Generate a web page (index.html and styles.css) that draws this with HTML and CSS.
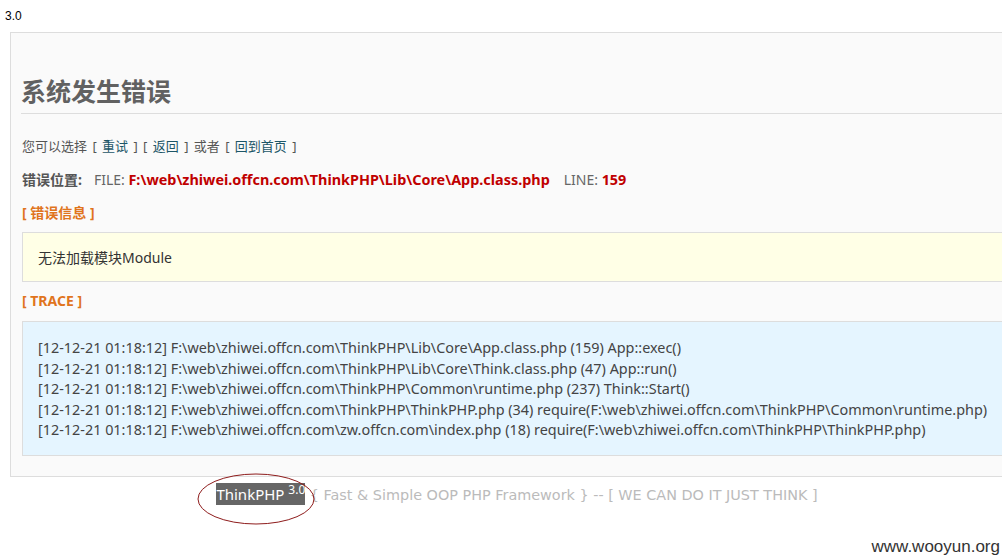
FILE: index.html
```html
<!DOCTYPE html>
<html lang="zh-CN">
<head>
<meta charset="utf-8">
<title>系统发生错误</title>
<link rel="stylesheet" href="styles.css">
</head>
<body>
<div class="ver">3.0</div>
<div class="page">
  <div class="error">
    <h1>系统发生错误</h1>
    <div class="choice">您可以选择 [ <a href="#">重试</a> ] [ <a href="#">返回</a> ] 或者 [ <a href="#">回到首页</a> ]</div>
    <div class="pos"><span class="label">错误位置:</span><span class="key">FILE:</span> <span class="red">F:\web\zhiwei.offcn.com\ThinkPHP\Lib\Core\App.class.php</span><span class="key line">LINE:</span> <span class="red">159</span></div>
    <div class="title">[ 错误信息 ]</div>
    <div class="message">无法加载模块Module</div>
    <div class="title">[ TRACE ]</div>
    <div class="trace">
      <div>[12-12-21 01:18:12] F:\web\zhiwei.offcn.com\ThinkPHP\Lib\Core\App.class.php (159) App::exec()</div>
      <div>[12-12-21 01:18:12] F:\web\zhiwei.offcn.com\ThinkPHP\Lib\Core\Think.class.php (47) App::run()</div>
      <div>[12-12-21 01:18:12] F:\web\zhiwei.offcn.com\ThinkPHP\Common\runtime.php (237) Think::Start()</div>
      <div>[12-12-21 01:18:12] F:\web\zhiwei.offcn.com\ThinkPHP\ThinkPHP.php (34) require(F:\web\zhiwei.offcn.com\ThinkPHP\Common\runtime.php)</div>
      <div>[12-12-21 01:18:12] F:\web\zhiwei.offcn.com\zw.offcn.com\index.php (18) require(F:\web\zhiwei.offcn.com\ThinkPHP\ThinkPHP.php)</div>
    </div>
  </div>
  <div class="copyright"><span class="brand">ThinkPHP <sup>3.0</sup></span> { Fast &amp; Simple OOP PHP Framework } -- [ WE CAN DO IT JUST THINK ]</div>
</div>
<svg class="mark" width="120" height="54" viewBox="0 0 120 54"><ellipse cx="60" cy="27" rx="58" ry="25" fill="none" stroke="#8e1c1c" stroke-width="1"/></svg>
<div class="watermark">www.wooyun.org</div>
</body>
</html>
```
FILE: styles.css
```css
html { overflow: hidden; }
body {
  margin: 0;
  padding: 8px 5px 0;
  font-family: "Noto Sans", "Noto Sans CJK SC", sans-serif;
  color: #333;
  background: #fff;
  width: 1030px;
}
.ver {
  font-family: "Liberation Sans", sans-serif;
  font-size: 12px;
  line-height: 16px;
  color: #000;
}
.page { margin-left: 5px; width: 1014px; }
.error {
  margin-top: 8px;
  border: 1px solid #ddd;
  background: #fafafa;
  padding: 0 0 20px 11px;
}
h1 {
  margin: 40px 0 0 -1px;
  font-size: 25px;
  line-height: 34px;
  font-weight: bold;
  color: #616161;
  padding-bottom: 6px;
  border-bottom: 1px solid #ddd;
  font-family: "Noto Sans CJK SC", sans-serif;
}
.choice {
  margin-top: 22px;
  font-size: 13px;
  line-height: 20px;
  color: #555;
  word-spacing: 2px;
}
.choice a { color: #1c5667; text-decoration: none; }
.pos {
  margin-top: 14px;
  font-size: 14px;
  line-height: 20px;
  color: #666;
}
.label { font-weight: bold; color: #555; }
.key { margin-left: 12px; font-size: 14px; }
.key.line { margin-left: 14px; }
.red { color: #c00000; font-weight: bold; font-size: 14.4px; }
.title {
  margin-top: 13px;
  font-size: 14px;
  line-height: 20px;
  font-weight: bold;
  color: #e0741d;
}
.message {
  margin-top: 9px;
  border: 1px solid #ddd;
  background: #ffffe6;
  padding: 15px 15px 13px;
  font-size: 14px;
  line-height: 20px;
  color: #333;
}
.message + .title { margin-top: 9px; }
.trace {
  margin-top: 10px;
  border: 1px solid #ddd;
  background: #e5f5ff;
  padding: 16px 15px 14px;
  font-size: 14.4px;
  line-height: 20.5px;
  color: #444;
  white-space: nowrap;
}
.copyright {
  margin-top: 7px;
  text-align: center;
  font-family: "DejaVu Sans", sans-serif;
  font-size: 14.4px;
  line-height: 20px;
  color: #bbb;
}
.brand {
  background: #666;
  color: #fff;
  padding: 1px 0 1px;
  font-family: "Noto Sans", sans-serif;
  font-size: 15px;
}
.brand sup { font-size: 12px; line-height: 0; }
.mark { position: absolute; left: 196px; top: 472px; }
.watermark {
  position: absolute;
  right: 2px;
  top: 537px;
  font-family: "Liberation Sans", sans-serif;
  font-size: 17px;
  line-height: 20px;
  color: #333;
}
```
